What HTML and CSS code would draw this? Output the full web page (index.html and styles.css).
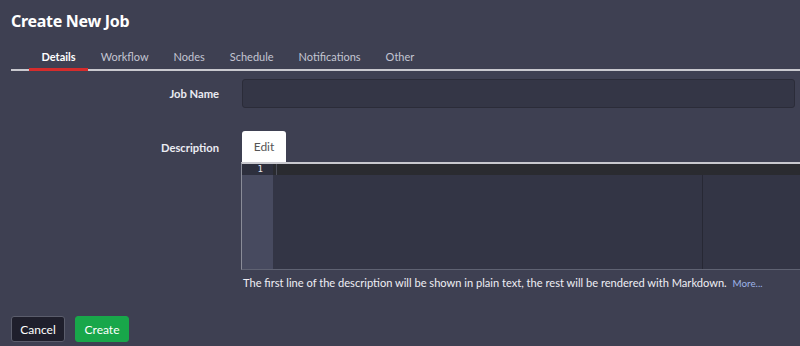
FILE: index.html
```html
<!DOCTYPE html>
<html>
<head>
<meta charset="utf-8">
<link rel="stylesheet" href="styles.css">
</head>
<body>
<div class="page">
  <h1 class="title">Create New Job</h1>
  <nav class="tabs">
    <span class="tab active">Details</span>
    <span class="tab">Workflow</span>
    <span class="tab">Nodes</span>
    <span class="tab">Schedule</span>
    <span class="tab">Notifications</span>
    <span class="tab">Other</span>
  </nav>
  <div class="form">
    <div class="row row-name">
      <label class="label">Job Name</label>
      <div class="field"><div class="input"></div></div>
    </div>
    <div class="row row-desc">
      <label class="label label-desc">Description</label>
      <div class="field">
        <div class="edit-tab">Edit</div>
        <div class="editor">
          <div class="gutter">
            <div class="gutter-active">1</div>
          </div>
          <div class="code">
            <div class="active-line"><span class="cursor"></span></div>
            <div class="print-margin"></div>
          </div>
        </div>
        <p class="help">The first line of the description will be shown in plain text, the rest will be rendered with Markdown. <a class="more">More...</a></p>
      </div>
    </div>
  </div>
  <div class="actions">
    <button class="btn btn-cancel">Cancel</button>
    <button class="btn btn-create">Create</button>
  </div>
</div>
</body>
</html>
```

FILE: styles.css
```css
html, body {
  margin: 0;
  padding: 0;
  background: #3e4052;
  overflow: hidden;
  height: 346px;
}
body {
  font-family: Lato, "Noto Sans", sans-serif;
  color: #e6e7ee;
}
.page {
  padding: 0 0 0 11px;
}
.title {
  margin: 0;
  padding-top: 11px;
  height: 21px;
  font-family: "Noto Sans", Lato, sans-serif;
  font-size: 16px;
  font-weight: 700;
  line-height: 20px;
  color: #ffffff;
  letter-spacing: -0.3px;
}
.tabs {
  display: flex;
  margin-top: 15px;
  padding-left: 18px;
  border-bottom: 2px solid #c9c9cf;
  height: 22px;
}
.tab {
  padding: 2px 12.5px 0;
  font-size: 11px;
  line-height: 16px;
  color: #c4c6d3;
  height: 22px;
  box-sizing: border-box;
  position: relative;
}
.tab.active {
  color: #ffffff;
  font-weight: 700;
}
.tab.active::after {
  content: "";
  position: absolute;
  left: 0;
  right: 0;
  bottom: -2px;
  height: 3px;
  background: #d52c2c;
}
.form {
  display: flex;
  flex-direction: column;
}
.row {
  display: grid;
  grid-template-columns: 208px 1fr;
  column-gap: 23px;
}
.row-name {
  margin-top: 8px;
  align-items: center;
}
.label {
  text-align: right;
  font-size: 11.2px;
  font-weight: 700;
  color: #ebecf2;
}
.label-desc {
  padding-top: 10px;
  line-height: 14px;
}
.input {
  width: 553px;
  height: 29px;
  box-sizing: border-box;
  background: #343646;
  border: 1px solid #2b2c39;
  border-radius: 3px;
}
.row-desc {
  margin-top: 23px;
}
.field {
  min-width: 0;
}
.edit-tab {
  width: 44px;
  height: 31px;
  box-sizing: border-box;
  background: #ffffff;
  border-radius: 3px 3px 0 0;
  color: #555;
  font-size: 12px;
  line-height: 32px;
  text-align: center;
}
.editor {
  display: flex;
  width: 600px;
  height: 108px;
  border-top: 2px solid #c8c8ce;
  border-left: 1px solid #8a8c98;
  border-bottom: 1px solid #5f6272;
  box-sizing: border-box;
  background: #333545;
  margin-left: -1px;
}
.gutter {
  width: 31px;
  background: #474a5f;
  flex: none;
}
.gutter-active {
  height: 11px;
  background: #2d2f3d;
  color: #e8e8ee;
  font-family: "DejaVu Sans Mono", monospace;
  font-size: 9px;
  line-height: 11px;
  text-align: right;
  padding-right: 10px;
}
.code {
  flex: 1;
  position: relative;
}
.active-line {
  height: 11px;
  background: #2a2b30;
}
.cursor {
  display: block;
  margin-left: 3px;
  width: 1px;
  height: 11px;
  background: #4d4f5a;
}
.print-margin {
  position: absolute;
  left: 429px;
  top: 11px;
  bottom: 0;
  width: 1px;
  background: #272834;
}
.help {
  margin: 6px 0 0 1px;
  font-size: 11.1px;
  line-height: 14px;
  color: #eeeef4;
}
.more {
  color: #9db3e8;
  font-size: 9.8px;
  margin-left: 3px;
}
.actions {
  display: flex;
  gap: 10px;
  margin-top: 26px;
}
.btn {
  height: 26px;
  padding: 0 12px;
  border-radius: 3px;
  font-family: Lato, "Noto Sans", sans-serif;
  font-size: 12px;
  color: #ffffff;
  box-sizing: border-box;
}
.btn-cancel {
  width: 54px;
  padding: 0;
  background: #1f1f2c;
  border: 1px solid #5b5d6c;
}
.btn-create {
  width: 54px;
  padding: 0;
  background: #18a74a;
  border: 1px solid #18a74a;
}
```
